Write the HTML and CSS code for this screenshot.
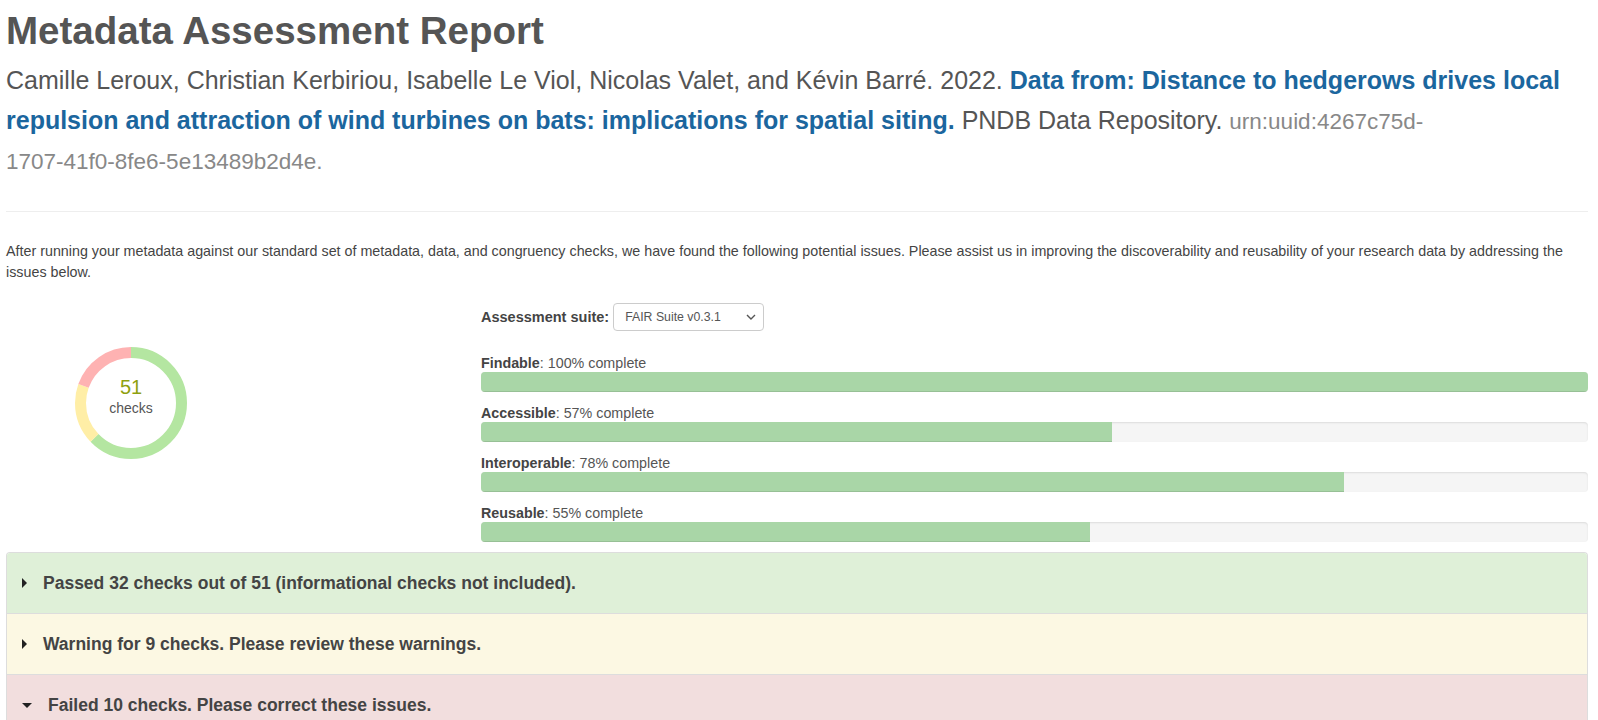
FILE: index.html
```html
<!DOCTYPE html>
<html lang="en">
<head>
    <meta charset="UTF-8">
    <meta name="viewport" content="width=device-width, initial-scale=1.0">
    <title>Metadata Assessment Report</title>
    <link rel="stylesheet" href="styles.css">
</head>
<body>
    <div class="page">
        <h1 class="title">Metadata Assessment Report</h1>
        <p class="citation">
            Camille Leroux, Christian Kerbiriou, Isabelle Le Viol, Nicolas Valet, and Kévin Barré. 2022.
            <a class="cite-title" href="#">Data from: Distance to hedgerows drives local repulsion and attraction of wind turbines on bats: implications for spatial siting.</a>
            PNDB Data Repository. <span class="cite-id">urn:uuid:4267c75d-<span class="nowrap">1707-41f0-8fe6-5e13489b2d4e.</span></span>
        </p>

        <hr>

        <p class="intro">After running your metadata against our standard set of metadata, data, and congruency checks, we have found the following potential issues. Please assist us in improving the discoverability and reusability of your research data by addressing the issues below.</p>

        <div class="summary">
            <div class="chart-col">
                <div class="donut">
                    <!-- 32 passed, 9 warnings, 10 failed out of 51 -->
                    <svg width="112" height="112" viewBox="0 0 112 112">
                        <g transform="rotate(-90 56 56)" fill="none" stroke-width="11">
                            <circle cx="56" cy="56" r="50.5" stroke="#b4e6a1" stroke-dasharray="199.1 317.3" stroke-dashoffset="0"></circle>
                            <circle cx="56" cy="56" r="50.5" stroke="#ffeea6" stroke-dasharray="56 317.3" stroke-dashoffset="-199.1"></circle>
                            <circle cx="56" cy="56" r="50.5" stroke="#feb2b2" stroke-dasharray="62.2 317.3" stroke-dashoffset="-255.1"></circle>
                        </g>
                    </svg>
                    <div class="donut-label">
                        <span class="donut-count">51</span>
                        <span class="donut-unit">checks</span>
                    </div>
                </div>
            </div>

            <div class="scores-col">
                <div class="suite-row">
                    <span class="suite-label">Assessment suite:</span>
                    <div class="suite-select">
                        <span>FAIR Suite v0.3.1</span>
                        <svg width="10" height="6" viewBox="0 0 10 6"><path d="M1 1l4 4 4-4" fill="none" stroke="#555" stroke-width="1.4"></path></svg>
                    </div>
                </div>

                <div class="score">
                    <div class="score-label"><strong>Findable</strong>: 100% complete</div>
                    <div class="bar"><div class="bar-fill" style="width: 100%"></div></div>
                </div>
                <div class="score">
                    <div class="score-label"><strong>Accessible</strong>: 57% complete</div>
                    <div class="bar"><div class="bar-fill" style="width: 57%"></div></div>
                </div>
                <div class="score">
                    <div class="score-label"><strong>Interoperable</strong>: 78% complete</div>
                    <div class="bar"><div class="bar-fill" style="width: 78%"></div></div>
                </div>
                <div class="score">
                    <div class="score-label"><strong>Reusable</strong>: 55% complete</div>
                    <div class="bar"><div class="bar-fill" style="width: 55%"></div></div>
                </div>
            </div>
        </div>

        <div class="results">
            <div class="result passed"><span class="caret caret-right"></span>Passed 32 checks out of 51 (informational checks not included).</div>
            <div class="result warning"><span class="caret caret-right"></span>Warning for 9 checks. Please review these warnings.</div>
            <div class="result failed"><span class="caret caret-down"></span>Failed 10 checks. Please correct these issues.</div>
        </div>
    </div>
</body>
</html>
```

FILE: styles.css
```css
body {
    margin: 0;
    font-family: "Liberation Sans", Arial, sans-serif;
    font-size: 14px;
    line-height: 20px;
    color: #555;
    background-color: #ffffff;
}
.page {
    padding: 1px 10px 0 6px;
}
.title {
    font-size: 38.5px;
    line-height: 40px;
    font-weight: bold;
    color: #555;
    margin: 10px 0 9px;
}
.citation {
    font-size: 25px;
    line-height: 40px;
    margin: 0;
    color: #555;
}
.cite-title {
    color: #1b669e;
    font-weight: bold;
    text-decoration: none;
}
.cite-id {
    font-size: 22.5px;
    line-height: 1;
    color: #888;
}
.nowrap {
    white-space: nowrap;
}
hr {
    border: 0;
    border-top: 1px solid #eee;
    margin: 31px 0 29px;
}
.intro {
    font-size: 14.3px;
    line-height: 21px;
    margin: 0;
    color: #444;
}
.summary {
    display: grid;
    grid-template-columns: 475px 1fr;
    margin-top: 20px;
}
.chart-col {
    padding: 44px 0 0 69px;
}
.donut {
    position: relative;
    width: 112px;
    height: 112px;
}
.donut svg {
    display: block;
}
.donut-label {
    position: absolute;
    top: 0;
    left: 0;
    right: 0;
    bottom: 0;
    display: flex;
    flex-direction: column;
    align-items: center;
    justify-content: center;
    padding-bottom: 13px;
    box-sizing: border-box;
}
.donut-count {
    font-size: 20px;
    line-height: 22px;
    color: #8fa10f;
}
.donut-unit {
    font-size: 14px;
    line-height: 20px;
    color: #555;
}
.suite-row {
    display: flex;
    align-items: center;
    gap: 4px;
    height: 28px;
    margin-bottom: 23px;
}
.suite-label {
    font-weight: bold;
    font-size: 14.5px;
    color: #444;
}
.suite-select {
    display: flex;
    align-items: center;
    justify-content: space-between;
    gap: 25px;
    height: 26px;
    padding: 0 7px 0 11px;
    border: 1px solid #ccc;
    border-radius: 4px;
    font-size: 12.3px;
    color: #555;
    background-color: #fff;
}
.score {
    margin-bottom: 12px;
}
.score:last-child {
    margin-bottom: 0;
}
.score-label {
    font-size: 14.3px;
    line-height: 18px;
    color: #555;
}
.score-label strong {
    color: #444;
}
.bar {
    height: 20px;
    background-color: #f5f5f5;
    border-radius: 4px;
    box-shadow: inset 0 1px 2px rgba(0,0,0,0.1);
    overflow: hidden;
}
.bar-fill {
    height: 100%;
    background-color: #a9d6a7;
    box-shadow: inset 0 -1px 0 rgba(0,0,0,0.1);
}
.results {
    margin-top: 10px;
    border: 1px solid #ddd;
    border-bottom: 0;
    border-radius: 4px 4px 0 0;
    overflow: hidden;
}
.result {
    display: flex;
    align-items: center;
    padding: 20px 15px;
    font-size: 17.5px;
    line-height: 20px;
    font-weight: bold;
    color: #444;
    border-bottom: 1px solid #ddd;
}
.passed {
    background-color: #dff0d8;
}
.warning {
    background-color: #fcf8e3;
}
.failed {
    background-color: #f2dede;
}
.caret {
    width: 0;
    height: 0;
    margin-right: 16px;
}
.caret-right {
    border-left: 5px solid #222;
    border-top: 5px solid transparent;
    border-bottom: 5px solid transparent;
}
.caret-down {
    border-top: 5px solid #222;
    border-left: 5px solid transparent;
    border-right: 5px solid transparent;
}
```
